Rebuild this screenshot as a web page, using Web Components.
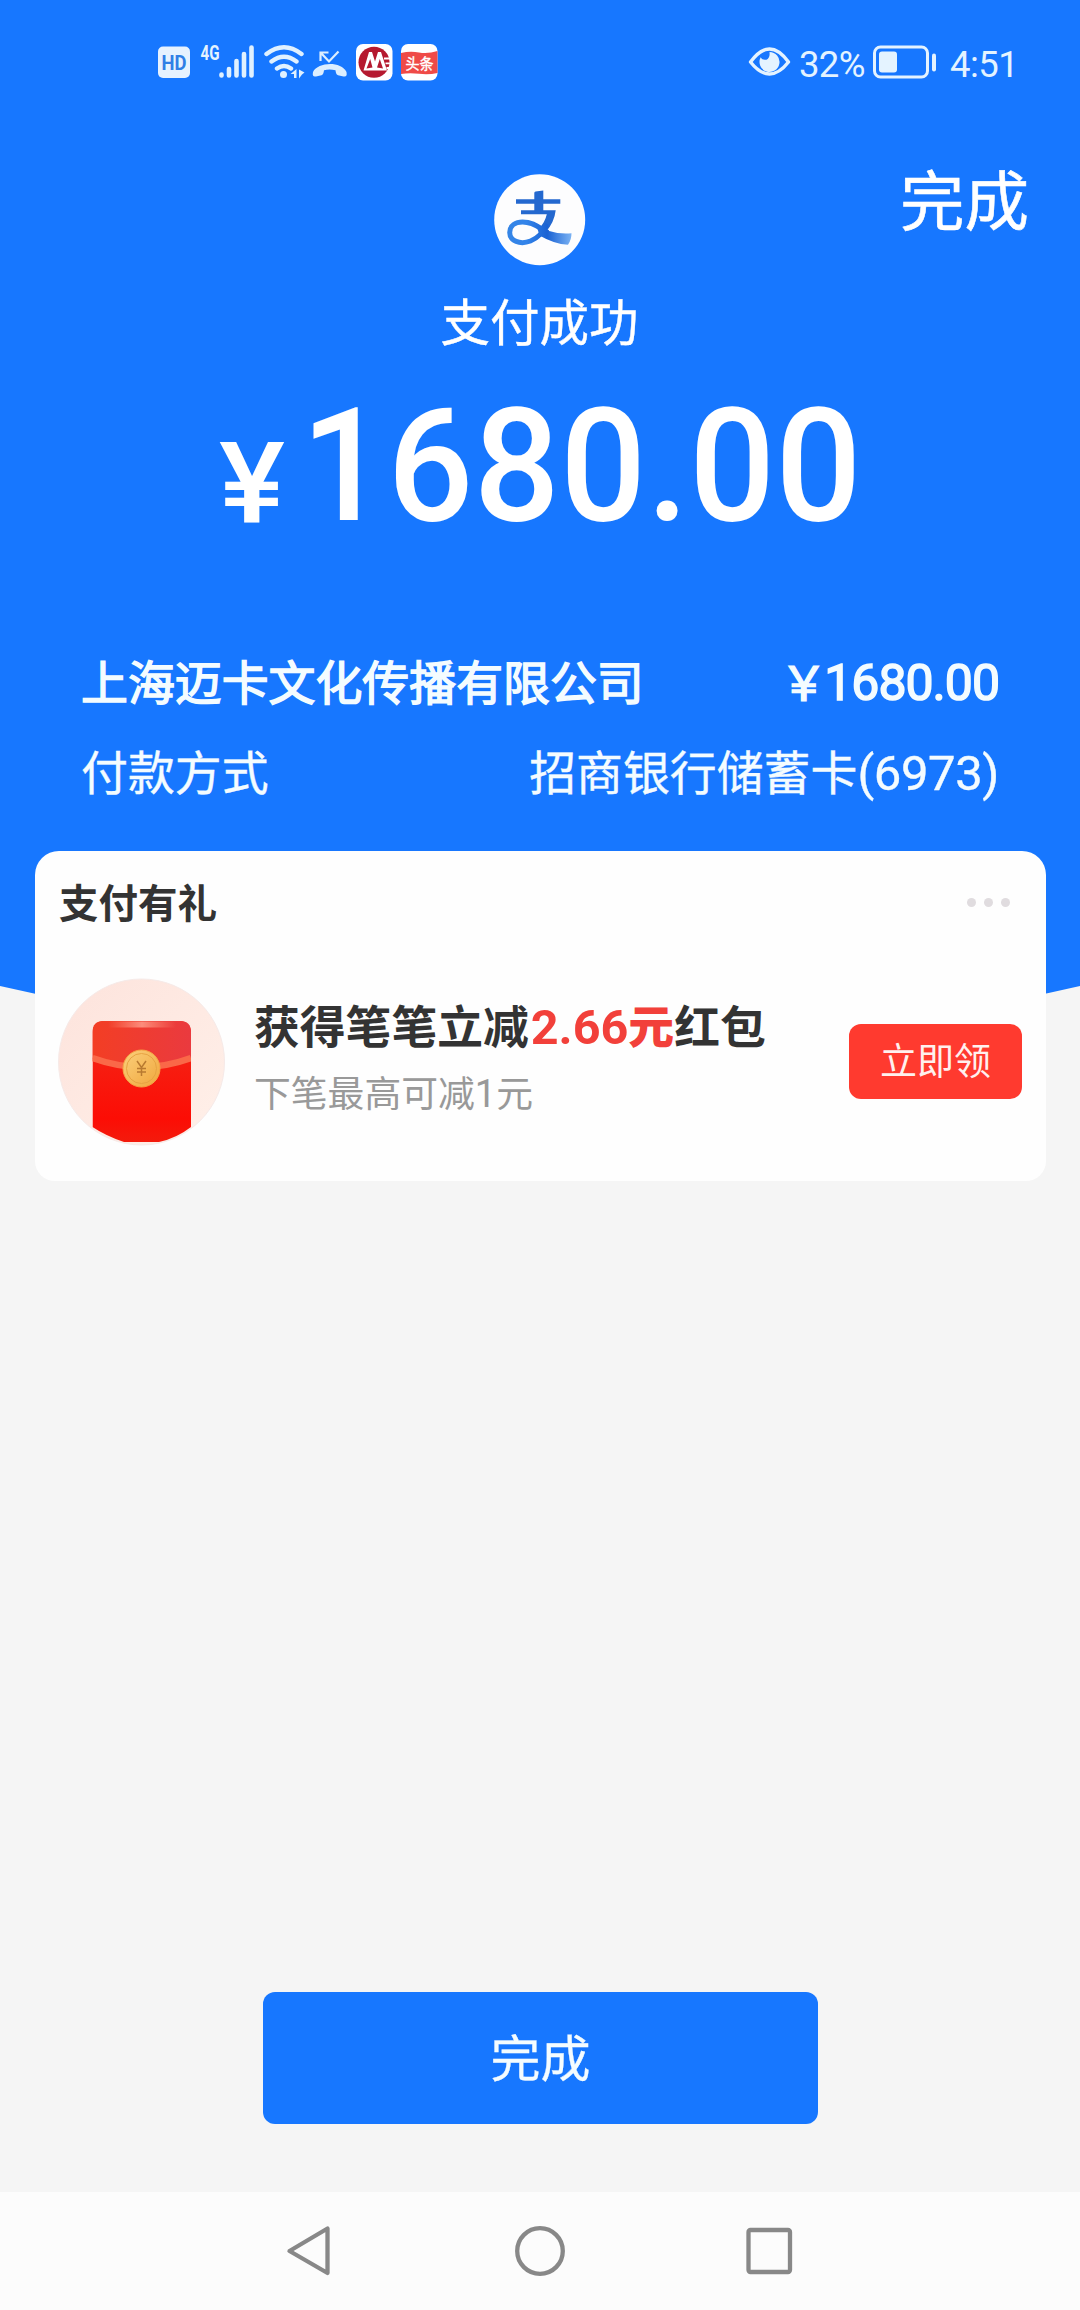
<!DOCTYPE html>
<html lang="zh-CN">
<head>
<meta charset="utf-8">
<title>支付成功</title>
<style>
  html, body { margin: 0; background: #f5f5f5; }
  body { width: 1080px; height: 2310px; overflow: hidden; font-family: "Noto Sans CJK SC", sans-serif; color: #fff; }
</style>
</head>
<body>
<pay-result-page></pay-result-page>
<script>
const define = (name, html) => {
  const template = document.createElement('template');
  template.innerHTML = html;
  customElements.define(name, class extends HTMLElement {
    constructor() {
      super();
      this.attachShadow({ mode: 'open' }).append(template.content.cloneNode(true));
    }
  });
};

define('status-bar', `
<style>
  :host { display: flex; justify-content: space-between; align-items: center; height: 124px; padding: 0 63px 0 157px; box-sizing: border-box; color: #e4f3ff; }
  svg { display: block; }
  .right { display: flex; align-items: center; font: 400 36.500px/44px Roboto, sans-serif; height: 44px; }
  .pct { margin-left: 8px; width: 68px; letter-spacing: -.7px; padding-top: 5px; }
  .bat { margin-left: 6px; }
  .time { margin-left: 13px; width: 67px; letter-spacing: -.5px; padding-top: 5px; }
</style>
<svg width="284" height="44" viewBox="157 40 284 44">
  <rect x="158" y="46.500" width="32" height="31.500" rx="5" fill="#e6f2ff"/>
  <text x="161.500" y="70" font-family="Roboto" font-weight="700" font-size="20.500" textLength="25" lengthAdjust="spacingAndGlyphs" fill="#2f7fe6">HD</text>
  <text x="200.500" y="60" font-family="Roboto" font-weight="700" font-size="20.500" textLength="19" lengthAdjust="spacingAndGlyphs" fill="#e4f3ff">4G</text>
  <g stroke="#e0f1ff" stroke-width="4.600" stroke-linecap="round">
    <path d="M221.500 74.500v1M229 69v6.500M236.500 61v14.500M244 54v21.500M251.500 47.500v28"/>
  </g>
  <g fill="none" stroke="#e0f1ff" stroke-width="4.400" stroke-linecap="round">
    <path d="M266.500 54Q284 40.500 301.500 54M271.500 61.500Q284 52 296.500 61.500M277 68.500Q284 63.500 291 68.500"/>
  </g>
  <circle cx="283.500" cy="74.500" r="3.500" fill="#e0f1ff"/>
  <path d="M296.500 69v9h-2.500v-4h-3.500zM299 78.500v-9l5.500 3-2.500 2z" fill="#e0f1ff"/>
  <path d="M320.500 61V52.500h8M321 53l8 8.500L338.500 51.500" fill="none" stroke="#dceeff" stroke-width="2.200"/>
  <path d="M313 72c5-10 28-11 33.500 0 .8 4-.5 5-3 4.500l-5.500-1.200c-2-.6-2.200-3.300-2.500-5-4-1-8-1-11.500 0-.3 1.700-.5 4.400-2.500 5l-5.500 1.200c-2.500.5-3.800-.5-3-4.500z" fill="#dceeff"/>
  <rect x="356" y="44" width="36.500" height="36.500" rx="7" fill="#fff"/>
  <circle cx="374" cy="62.300" r="15.500" fill="#b5192f"/>
  <path d="M361.500 70.500h2l5.500-18.500h3l3 9.500 3-9.500h3l6 18.500z" fill="#fff"/>
  <path d="M366.500 68.500l3.700-9.500 2.300 8.500zM377 67.500l2.800-8.500 3.200 9.500z" fill="#b5192f"/>
  <path d="M384 58.500h8M385.500 63.300h6.500M386.500 68h4.500" stroke="#fff" stroke-width="1.800"/>
  <rect x="401" y="44" width="36.500" height="36.500" rx="7" fill="#fff"/>
  <path d="M401 53q9-2 18-.5t18.500-1.500v22q-9 2-18.500.8T401 74z" fill="#ef4a47"/>
  <text x="405.500" y="68.500" font-family="Noto Sans CJK SC" font-weight="400" font-size="14.500" textLength="28" lengthAdjust="spacingAndGlyphs" fill="#fff" stroke="#fff" stroke-width=".4">头条</text>
</svg>
<div class="right">
  <svg width="43" height="32" viewBox="0 0 43 32">
    <path d="M2.500 16Q21.500-10 40.500 16Q21.500 40 2.500 16z" fill="none" stroke="#e4f3ff" stroke-width="3.400" stroke-linejoin="round"/>
    <path d="M21.500 6a10 10 0 1 1-8.800 5.300c1.500 2.700 5 3.300 7 1.600 2.200-1.900 2-4.700 1.800-6.900z" fill="#e4f3ff"/>
  </svg>
  <span class="pct">32%</span>
  <svg class="bat" width="64" height="34" viewBox="0 0 64 34">
    <rect x="1.500" y="2" width="53" height="30" rx="6" fill="none" stroke="#e4f3ff" stroke-width="3"/>
    <rect x="6" y="6.500" width="18" height="21" rx="3" fill="#e4f3ff"/>
    <rect x="59" y="8.500" width="4" height="18" rx="2" fill="#e4f3ff"/>
  </svg>
  <span class="time">4:51</span>
</div>`);

define('alipay-logo', `
<style>:host { display: block; width: 92px; height: 92px; margin-left: -1px; } svg { display: block; }</style>
<svg width="92" height="92" viewBox="0 0 92 92">
  <defs>
    <linearGradient id="t" gradientUnits="userSpaceOnUse" x1="13" y1="0" x2="78" y2="0"><stop offset="0" stop-color="#3585e6"/><stop offset=".3" stop-color="#3384ea"/><stop offset=".62" stop-color="#1a62d4"/><stop offset="1" stop-color="#7db4f4"/></linearGradient>
  </defs>
  <circle cx="45.700" cy="45.700" r="45.500" fill="#fdfdfe"/>
  <path d="M22 25.300H40.300V19Q40.300 17.600 41.600 17.400L49.300 16.500V25.300H66.300V29.700H49.300V36.300H61.700Q60.500 48 51.500 58.500L45 54.500Q51 48.500 52.800 40.300H27V36.300H40.300V29.700H22Z" fill="#2468cf"/>
  <path d="M53.500 50C50 57 44 64 36.500 67 26 71 15.700 67 15.700 58.500 15.700 51 22 48 28.500 48 40 48 46 54.500 54 58.500" fill="none" stroke="url(#t)" stroke-width="5"/>
  <path d="M42 50Q56 61 77.500 59.300Q77.500 66 74 70.800Q60 70 45.500 61.500z" fill="url(#t)"/>
</svg>`);

define('pay-row', `
<style>
  :host { display: flex; justify-content: space-between; height: 60px; line-height: 60px; font-size: 46.900px; color: #f4fcff; -webkit-text-stroke: .4px currentColor; }
  :host([strong]) { -webkit-text-stroke: 1.500px currentColor; }
</style>
<slot name="label"></slot><slot name="value"></slot>`);

define('pay-hero', `
<style>
  :host { display: block; height: 1060px; background: #1777ff; clip-path: path("M0 0H1080V986Q540 1110 0 986Z"); }
  .top { display: grid; grid-template-columns: 1fr auto 1fr; height: 166px; align-items: start; }
  alipay-logo { grid-column: 2; margin-top: 50px; }
  .done { grid-column: 3; justify-self: end; margin: 40px 51px 0 0; font-size: 64.500px; line-height: 66px; -webkit-text-stroke: .6px #fff; }
  .state { height: 60px; line-height: 60px; font-size: 49.500px; text-align: center; margin-left: -1px; -webkit-text-stroke: .4px #fff; }
  .amount { display: flex; align-items: baseline; margin-top: 41px; padding-left: 219px; height: 133px; font-family: Roboto, sans-serif; font-weight: 500; }
  .yen { font-size: 114px; width: 82px; transform: translateY(3px) scaleX(1.090); transform-origin: 0 50%; line-height: 150px; }
  .num { font-size: 157.500px; letter-spacing: .5px; line-height: 150px; transform: scaleX(.96); transform-origin: 0 50%; }
  .rows { display: flex; flex-direction: column; gap: 30px; padding: 126px 81px 0; }
  .d { font-family: Roboto, sans-serif; font-size: 49px; letter-spacing: -.4px; }
  .m { font-family: Roboto, sans-serif; font-size: 50px; letter-spacing: -1px; margin-left: -3px; }
</style>
<status-bar></status-bar>
<div class="top"><alipay-logo></alipay-logo><span class="done">完成</span></div>
<div class="state">支付成功</div>
<div class="amount"><span class="yen">¥</span><span class="num">1680.00</span></div>
<div class="rows">
  <pay-row strong><span slot="label">上海迈卡文化传播有限公司</span><span slot="value">￥<span class="m">1680.00</span></span></pay-row>
  <pay-row><span slot="label">付款方式</span><span slot="value">招商银行储蓄卡<span class="d">(6973)</span></span></pay-row>
</div>`);

define('red-packet', `
<style>:host { display: block; width: 168px; height: 168px; flex: none; } svg { display: block; }</style>
<svg width="168" height="168" viewBox="0 0 168 168">
  <defs>
    <linearGradient id="b" x1="0" y1="0" x2="0" y2="1"><stop offset="0" stop-color="#f22a1a"/><stop offset=".75" stop-color="#fc0d05"/><stop offset="1" stop-color="#f0200f"/></linearGradient>
    <linearGradient id="f" x1="0" y1="0" x2="1" y2="0"><stop offset="0" stop-color="#f33e24"/><stop offset="1" stop-color="#ea3a3f"/></linearGradient>
    <linearGradient id="c" x1="0" y1="0" x2="1" y2="1"><stop offset="0" stop-color="#fbd07c"/><stop offset="1" stop-color="#f0a63c"/></linearGradient>
    <linearGradient id="g" x1="0" y1="0" x2="1" y2="1"><stop offset="0" stop-color="#fde3dc"/><stop offset="1" stop-color="#fff0e9"/></linearGradient>
    <linearGradient id="h" x1="0" y1="0" x2="1" y2="0"><stop offset="0" stop-color="#ff9a80" stop-opacity="0"/><stop offset=".5" stop-color="#ffa08e" stop-opacity=".8"/><stop offset="1" stop-color="#ff9a80" stop-opacity="0"/></linearGradient>
    <clipPath id="k"><path d="M34.500 0H133V149Q119 160 101 164H66Q48 158 34.500 149z"/></clipPath>
  </defs>
  <circle cx="83.500" cy="84" r="83" fill="url(#g)" stroke="#f6eae8"/>
  <g clip-path="url(#k)">
    <rect x="34.500" y="43" width="98.500" height="130" rx="11" fill="url(#b)"/>
    <path d="M34.500 81V54q0-11 11-11H122q11 0 11 11V81Q84 101 34.500 81z" fill="url(#f)"/>
    <rect x="50" y="43.500" width="68" height="6" fill="url(#h)"/>
    <path d="M34.500 80Q84 98 133 80" fill="none" stroke="#fa6848" stroke-width="6.500"/>
  </g>
  <circle cx="83.500" cy="90.500" r="18.500" fill="url(#c)" stroke="#f5a545"/>
  <circle cx="83.500" cy="90.500" r="15" fill="none" stroke="#e7a343" stroke-width="1"/>
  <path d="M79 83l4.500 6.500L88 83M83.500 89.500V98M79 90.500h9M79 94h9" fill="none" stroke="#b87a30" stroke-width="1.500"/>
</svg>`);

define('gift-card', `
<style>
  :host { display: flex; flex-direction: column; box-sizing: border-box; position: relative; width: 1011px; height: 330px; margin: -209px auto 0 35px; padding: 0 24px; border-radius: 24px 24px 20px 20px; background: #fefefe; color: #333; }
  .head { display: flex; justify-content: space-between; align-items: center; height: 98px; }
  .title { font-size: 39.500px; line-height: 60px; font-weight: 700; padding-top: 1px; }
  .dots { display: flex; gap: 8px; margin: 5px 12px 0 0; }
  .dots i { width: 9px; height: 9px; border-radius: 50%; background: #e0dcdf; }
  .body { display: flex; align-items: center; padding-top: 29px; margin-left: -1px; height: 168px; }
  .text { flex: 1; padding: 0 0 15px 28px; }
  .main { font-size: 45.800px; line-height: 62px; font-weight: 700; white-space: nowrap; }
  .main b { color: #f2403a; padding-left: 2px; }
  .main i { font: 700 48.500px/50px Roboto, sans-serif; }
  .sub { font-size: 36.800px; line-height: 50px; color: #999; margin-top: 11px; }
  .sub i { font: 400 38px/40px Roboto, sans-serif; }
  .btn { width: 173px; height: 75px; margin-top: -1px; border-radius: 12px; background: #ff3a2f; color: #fff0ee; font-size: 37px; line-height: 70px; text-align: center; }
</style>
<div class="head"><span class="title">支付有礼</span><span class="dots"><i></i><i></i><i></i></span></div>
<div class="body">
  <red-packet></red-packet>
  <div class="text"><div class="main">获得笔笔立减<b><i>2.66</i>元</b>红包</div><div class="sub">下笔最高可减<i>1</i>元</div></div>
  <div class="btn">立即领</div>
</div>`);

define('nav-bar', `
<style>
  :host { display: grid; grid-template-columns: 1fr 1fr 1fr; box-sizing: border-box; height: 118px; background: #fcfcfc; padding: 33px 193px; justify-items: center; }
  svg { display: block; }
</style>
<svg width="52" height="52" viewBox="0 0 52 52"><path d="M44.500 3.500v44.500L6.500 26z" fill="none" stroke="#888" stroke-width="4.300" stroke-linejoin="round"/></svg>
<svg width="52" height="52" viewBox="0 0 52 52"><circle cx="26" cy="26" r="22.800" fill="none" stroke="#888" stroke-width="4.300"/></svg>
<svg width="52" height="52" viewBox="0 0 52 52"><rect x="3.500" y="5" width="41.500" height="42" rx="2" fill="none" stroke="#888" stroke-width="4.300"/></svg>`);

define('pay-result-page', `
<style>
  :host { display: flex; flex-direction: column; width: 1080px; height: 2310px; background: #f5f5f5; }
  pay-hero { flex: none; }
  gift-card { flex: none; }
  .finish { margin: auto auto 68px 263px; width: 555px; height: 132px; border-radius: 12px; background: #1777ff; color: #f4fcff; font-size: 50px; line-height: 127px; text-align: center; -webkit-text-stroke: .3px currentColor; }
</style>
<pay-hero></pay-hero>
<gift-card></gift-card>
<div class="finish">完成</div>
<nav-bar></nav-bar>`);
</script>
</body>
</html>
